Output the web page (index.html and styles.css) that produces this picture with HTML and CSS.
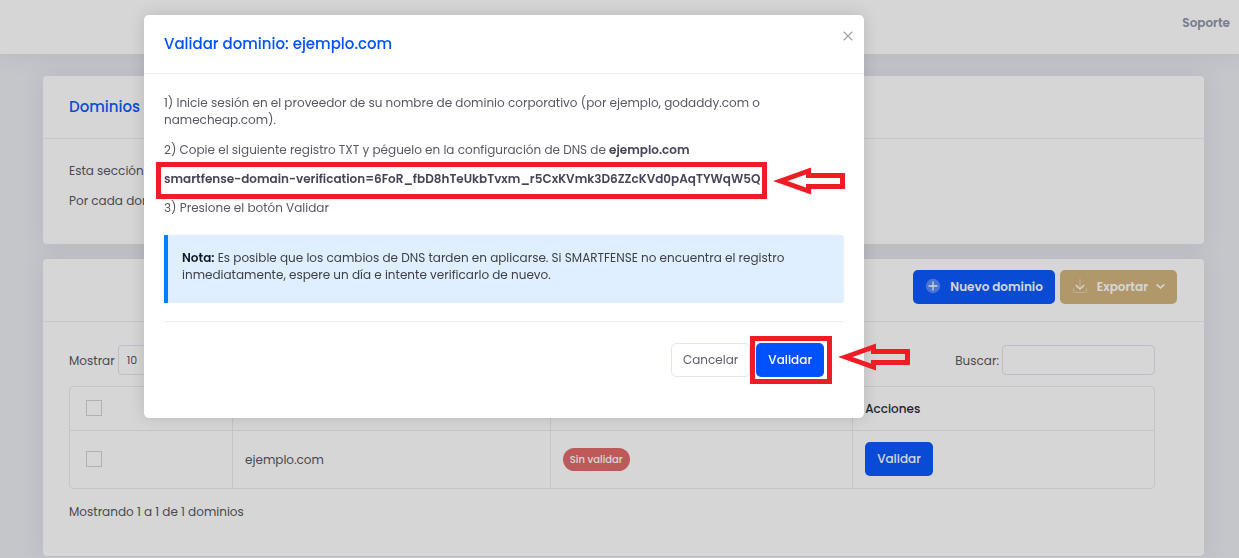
FILE: index.html
```html
<!DOCTYPE html>
<html lang="es">
<head>
<meta charset="utf-8">
<meta name="viewport" content="width=device-width, initial-scale=1">
<title>Dominios</title>
<link rel="stylesheet" href="styles.css">
</head>
<body>
<div class="page">
  <header class="topbar"><a class="topbar-link" href="#soporte">Soporte</a></header>
  <main class="content">
    <section class="card">
      <div class="card-head"><h1 class="card-title">Dominios</h1></div>
      <div class="card-body intro">
        <p class="text">Esta sección</p>
        <p class="text">Por cada dominio</p>
      </div>
    </section>
    <section class="card card-list">
      <div class="card-head card-tools">
        <button class="btn btn-primary btn-tool" type="button">
          <svg class="icon" viewBox="0 0 16 16" aria-hidden="true"><circle cx="8" cy="8" r="7.2" fill="#fff" fill-opacity=".3"/><path d="M8 4v8M4 8h8" stroke="#fff" stroke-width="1.3" stroke-linecap="round"/></svg>
          <span>Nuevo dominio</span>
        </button>
        <button class="btn btn-export btn-tool" type="button">
          <svg class="icon" viewBox="0 0 16 16" aria-hidden="true"><path d="M1.5 10.5v2.6q0 1.4 1.4 1.4h10.2q1.4 0 1.4-1.4v-2.6M8 1v9" fill="none" stroke="#fff" stroke-opacity=".35" stroke-width="1.2" stroke-linecap="round"/><path d="M4.2 7.500L8 11l3.800-3.500" fill="none" stroke="#fff" stroke-width="1.4" stroke-linecap="round" stroke-linejoin="round"/></svg>
          <span>Exportar</span>
          <svg class="caret" viewBox="0 0 8 6" aria-hidden="true"><path d="M1 1.500l3 2.700 3-2.700" fill="none" stroke="#fff" stroke-width="1.4" stroke-linecap="round"/></svg>
        </button>
      </div>
      <div class="card-body list-body">
        <div class="filters">
          <label class="filter">Mostrar
            <select class="field field-count"><option>10</option><option>25</option></select>
          </label>
          <label class="filter filter-search">Buscar:
            <input class="field field-search" type="search">
          </label>
        </div>
        <div class="table-frame">
          <table class="table">
            <colgroup><col class="col-check"><col class="col-domain"><col class="col-state"><col class="col-actions"></colgroup>
            <thead>
              <tr><th><input class="check" type="checkbox" aria-label="Seleccionar todos"></th><th>Dominio</th><th>Estado</th><th>Acciones</th></tr>
            </thead>
            <tbody>
              <tr><td><input class="check" type="checkbox" aria-label="Seleccionar ejemplo.com"></td><td>ejemplo.com</td><td><span class="badge">Sin validar</span></td><td><button class="btn btn-primary" type="button">Validar</button></td></tr>
            </tbody>
          </table>
        </div>
        <p class="text summary">Mostrando 1 a 1 de 1 dominios</p>
      </div>
    </section>
  </main>
</div>
<div class="backdrop">
  <div class="modal" role="dialog" aria-modal="true" aria-labelledby="modal-title">
    <div class="modal-head">
      <h2 class="modal-title" id="modal-title">Validar dominio: ejemplo.com</h2>
      <button class="close" type="button" aria-label="Cerrar"><svg class="close-icon" viewBox="0 0 10 10" aria-hidden="true"><path d="M.7.7l8.600 8.600M9.300.7L.7 9.300" stroke="#a0a2ae" stroke-width="1.300"/></svg></button>
    </div>
    <div class="modal-body">
      <p class="step">1) Inicie sesión en el proveedor de su nombre de dominio corporativo (por ejemplo, godaddy.com o namecheap.com).</p>
      <p class="step">2) Copie el siguiente registro TXT y péguelo en la configuración de DNS de <strong>ejemplo.com</strong></p>
      <div class="record">
        <strong class="record-text">smartfense-domain-verification=6FoR_fbD8hTeUkbTvxm_r5CxKVmk3D6ZZcKVd0pAqTYWqW5Q</strong>
        <svg class="arrow" viewBox="0 0 72 28" aria-hidden="true"><path d="M7.500 14L35.500 4v4.500h34v11h-34V24z" fill="none" stroke="#ee1c25" stroke-width="5"/></svg>
      </div>
      <p class="step">3) Presione el botón Validar</p>
      <div class="note"><strong>Nota:</strong> Es posible que los cambios de DNS tarden en aplicarse. Si SMARTFENSE no encuentra el registro inmediatamente, espere un día e intente verificarlo de nuevo.</div>
      <div class="actions">
        <button class="btn btn-cancel" type="button">Cancelar</button>
        <div class="mark">
          <button class="btn btn-primary" type="button">Validar</button>
          <svg class="arrow" viewBox="0 0 72 28" aria-hidden="true"><path d="M7.500 14L35.500 4v4.500h34v11h-34V24z" fill="none" stroke="#ee1c25" stroke-width="5"/></svg>
        </div>
      </div>
    </div>
  </div>
</div>
</body>
</html>
```
FILE: styles.css
```css
* { box-sizing: border-box; }
body {
  margin: 0;
  background: #e9ebf1;
  color: #504f5c;
  font-family: Poppins, Inter, "Open Sans", sans-serif;
  font-size: 12px;
  line-height: 17px;
  overflow: hidden;
}
h1, h2, p { margin: 0; }
button, input, select { font: inherit; }
strong { font-weight: 600; color: #464457; }
.topbar {
  display: flex;
  justify-content: flex-end;
  height: 54px;
  padding: 14px 9px;
  background: #fff;
  box-shadow: 0 0 24px rgba(69, 65, 98, .1);
}
.topbar-link { color: #8b8da3; font-weight: 600; text-decoration: none; }
.content { display: grid; gap: 15px; padding: 22px 35px 1px 43px; }
.card { background: #fff; border-radius: 4px; box-shadow: 0 0 24px rgba(69, 65, 98, .1); }
.card-head { display: flex; align-items: center; height: 63px; padding: 0 26px; border-bottom: 1px solid #ebedf2; }
.card-title { color: #0052ff; font-size: 15px; line-height: 20px; font-weight: 500; }
.card-body { padding: 23px 26px 35px; }
.intro { display: grid; gap: 13px; }
.card-tools { justify-content: flex-end; align-items: flex-start; gap: 5px; padding: 11px 27px; }
.btn {
  height: 34px;
  padding: 0 11px 2px;
  border: 1px solid transparent;
  border-radius: 5px;
  background: #fff;
  font-weight: 500;
}
.btn-primary { background: #0052ff; color: #fff; }
.btn-export { background: #d1b279; color: #fff; }
.btn-cancel { border-color: #e2e5ec; color: #5c5e70; font-weight: 400; min-width: 78px; }
.btn-tool { display: flex; align-items: center; font-weight: 600; }
.icon { width: 16px; height: 16px; margin-right: 9px; }
.caret { width: 9px; height: 7px; margin-left: 8px; }
.list-body { padding: 23px 49px 36px 26px; }
.filters { display: flex; justify-content: space-between; margin-bottom: 11px; }
.filter { display: flex; align-items: center; gap: 3px; }
.field { height: 30px; border: 1px solid #e2e2ee; border-radius: 4px; background: #fff; color: #504f5c; }
.field-count { width: 70px; padding: 0 4px; font-size: 11px; }
.field-search { width: 153px; padding: 0 8px; }
.table-frame { border: 1px solid #e9eaf0; border-radius: 4px; }
.table { width: 100%; table-layout: fixed; border-collapse: collapse; }
.col-check { width: 15%; }
.col-domain { width: 29.3%; }
.col-state { width: 27.9%; }
.table th, .table td { padding: 0 12px; text-align: left; vertical-align: middle; }
.table th { height: 43px; color: #1d1d2c; font-weight: 500; border-bottom: 1px solid #e9eaf0; }
.table td { height: 58px; }
.table th + th, .table td + td { border-left: 1px solid #e9eaf0; }
.check { appearance: none; display: block; width: 16px; height: 16px; margin: 0 4px; border: 1px solid #d1d1d6; }
.badge { display: inline-block; padding: 3px 7px; border-radius: 12px; background: #e06563; color: #fff; font-size: 10px; font-weight: 500; }
.summary { margin-top: 14px; }
.backdrop {
  position: fixed;
  inset: 0;
  padding: 15px 15px 15px 144px;
  background: rgba(50, 50, 50, .2);
}
.modal { max-width: 720px; background: #fff; border-radius: 5px; box-shadow: 0 0 16px rgba(0, 0, 0, .15); }
.modal-head { display: flex; justify-content: space-between; align-items: flex-start; padding: 19px 11px 19px 20px; border-bottom: 1px solid #ebedf2; }
.modal-title { color: #0052ff; font-size: 15px; line-height: 20px; font-weight: 500; }
.close { display: grid; width: 10px; height: 10px; margin-top: -3px; padding: 0; border: 0; background: none; }
.close-icon { width: 10px; height: 10px; }
.modal-body { padding: 20px 20px 34px; }
.step { color: #575962; margin-bottom: 13px; }
.record { display: flex; align-items: center; gap: 6px; margin: -9px 0 0 -8px; }
.record-text { padding: 3px 2px 7px 3px; border: 5px solid #ee1c25; white-space: nowrap; }
.arrow { width: 72px; height: 28px; flex: none; }
.note { margin: 19px 0 18px; padding: 14px 20px 20px 14px; border-left: 4px solid #0080ff; border-radius: 0 3px 3px 0; background: #dfefff; color: #3f4047; }
.note strong { color: #111827; }
.actions { display: flex; justify-content: flex-end; align-items: center; padding: 14px 12px 0; border-top: 1px solid #ebedf2; }
.mark { position: relative; border: 5px solid #ee1c25; padding: 2px 3px 2px 1px; }
.mark .btn { display: block; }
.mark .arrow { position: absolute; left: 100%; top: 2px; margin-left: 11px; }
```
